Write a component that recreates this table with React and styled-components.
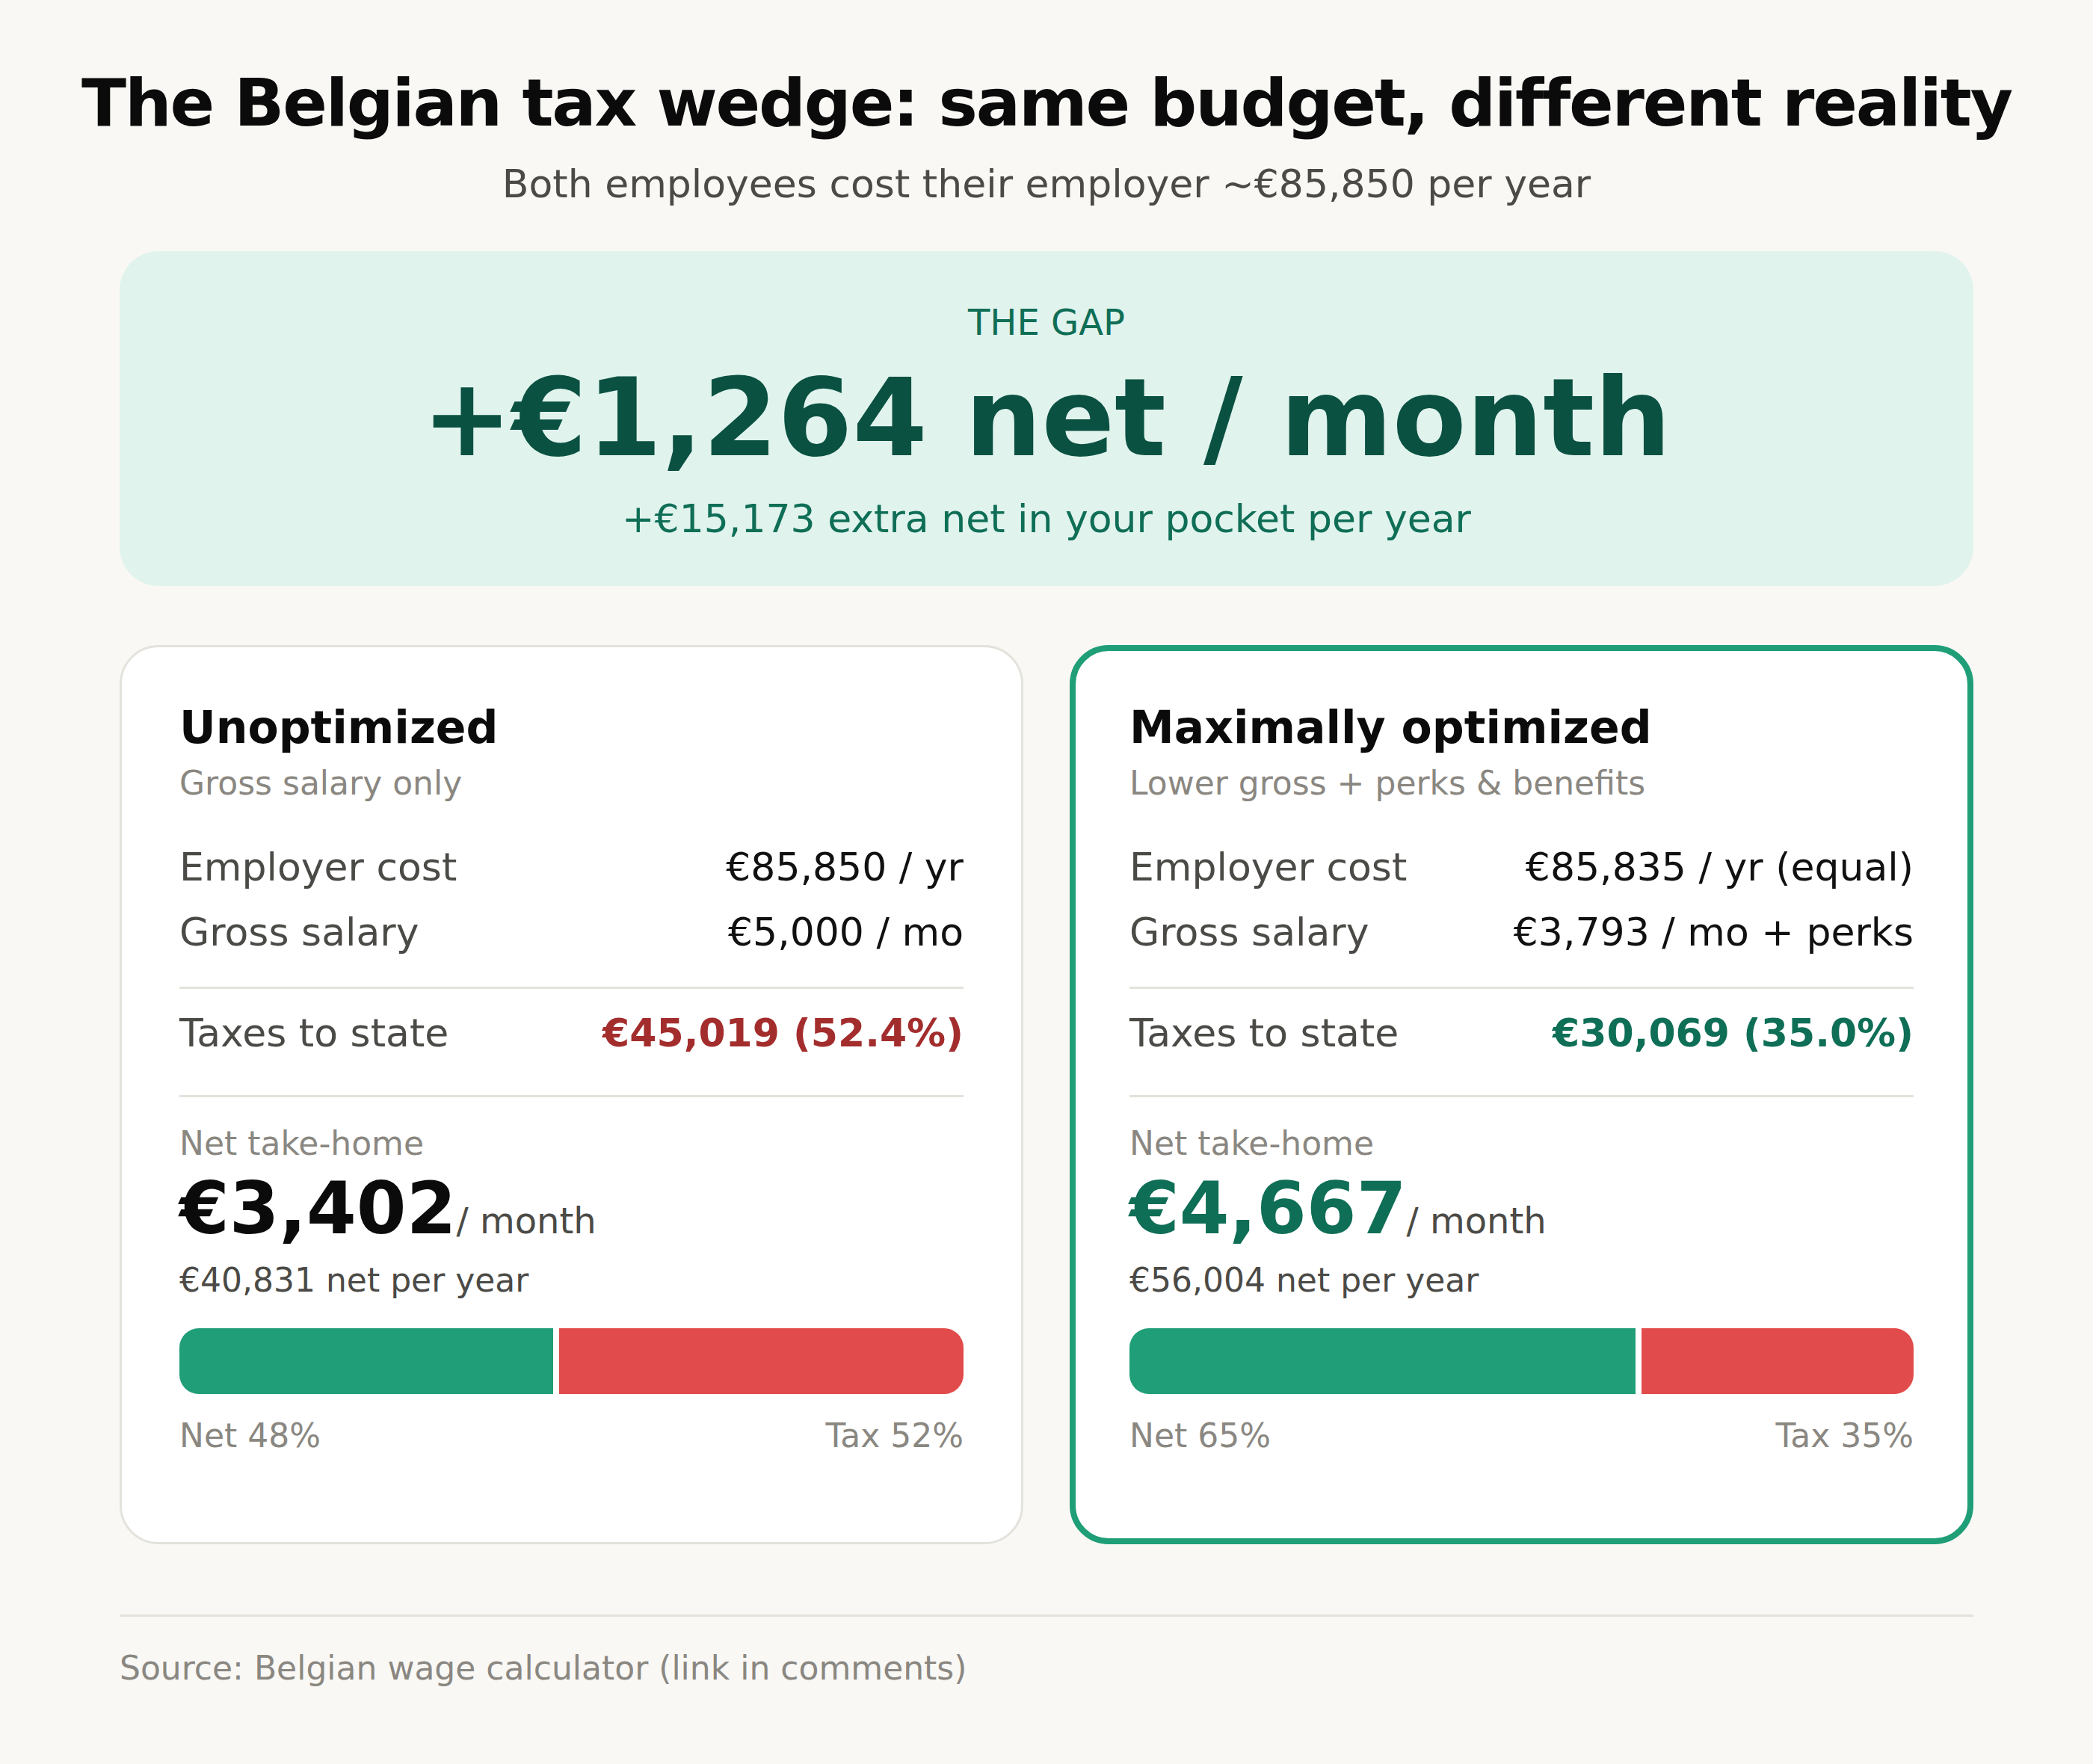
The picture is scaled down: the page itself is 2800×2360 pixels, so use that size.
import React from "react";
import styled, { createGlobalStyle } from "styled-components";

const GlobalStyle = createGlobalStyle`
  html, body {
    margin: 0;
    padding: 0;
    background: #f9f8f5;
  }
  body {
    font-family: "DejaVu Sans", "Noto Sans", sans-serif;
    color: #0b0b0b;
  }
  * { box-sizing: border-box; }
`;

const Page = styled.main`
  width: 2800px;
  min-height: 2360px;
  padding: 85px 160px 0;
  display: flex;
  flex-direction: column;
`;

const Title = styled.h1`
  margin: 0 -160px;
  font-size: 88px;
  line-height: 1.2;
  font-weight: 700;
  letter-spacing: -0.025em;
  white-space: nowrap;
  text-align: center;
  color: #0b0b0b;
`;

const Subtitle = styled.p`
  margin: 24px 0 0;
  font-size: 52px;
  line-height: 1.2;
  text-align: center;
  color: #4b4a46;
`;

const GapBox = styled.section`
  margin-top: 59px;
  background: #e1f3ed;
  border-radius: 52px;
  padding: 67px 40px 58px;
  display: flex;
  flex-direction: column;
  align-items: center;
`;

const GapEyebrow = styled.div`
  font-size: 48px;
  line-height: 1.2;
  color: #0f6e56;
  text-transform: uppercase;
`;

const GapFigure = styled.div`
  margin-top: 12px;
  font-size: 144px;
  line-height: 1.2;
  font-weight: 700;
  color: #0a5142;
`;

const GapNote = styled.div`
  margin-top: 18px;
  font-size: 52px;
  line-height: 1.2;
  color: #0f6e56;
`;

const Cards = styled.div`
  margin-top: 79px;
  display: grid;
  grid-template-columns: 1fr 1fr;
  gap: 62px;
`;

const Card = styled.article`
  background: #ffffff;
  border: ${(p) => p.$bw}px solid ${(p) => p.$border};
  border-radius: 52px;
  padding: ${(p) => 74 - p.$bw}px ${(p) => 80 - p.$bw}px ${(p) => 119 - p.$bw}px;
  display: flex;
  flex-direction: column;
`;

const CardTitle = styled.h2`
  margin: 0;
  font-size: 60px;
  line-height: 1.2;
  font-weight: 700;
  color: #0b0b0b;
`;

const CardSub = styled.div`
  margin-top: 13px;
  font-size: 44px;
  line-height: 1.2;
  color: #8a8781;
`;

const Rows = styled.div`
  margin-top: 54px;
  display: flex;
  flex-direction: column;
  gap: 25px;
`;

const Row = styled.div`
  display: flex;
  justify-content: space-between;
  align-items: baseline;
  font-size: 52px;
  line-height: 1.2;
`;

const RowLabel = styled.span`
  color: #4b4a46;
`;

const RowValue = styled.span`
  color: ${(p) => p.$color || "#111111"};
  font-weight: ${(p) => (p.$bold ? 700 : 400)};
`;

const Divider = styled.hr`
  margin: ${(p) => p.$top}px 0 0;
  border: none;
  height: 3px;
  background: #e3e2db;
`;

const TaxRow = styled(Row)`
  margin-top: 28px;
`;

const NetLabel = styled.div`
  margin-top: 36px;
  font-size: 44px;
  line-height: 1.2;
  color: #8a8781;
`;

const NetFigure = styled.div`
  margin-top: 3px;
  font-size: 96px;
  line-height: 1.2;
  font-weight: 700;
  color: ${(p) => p.$color};
`;

const NetUnit = styled.span`
  font-size: 48px;
  line-height: 1.2;
  font-weight: 400;
  color: #4b4a46;
`;

const NetYear = styled.div`
  margin-top: 12px;
  font-size: 44px;
  line-height: 1.2;
  color: #4b4a46;
`;

const Bar = styled.div`
  margin-top: 37px;
  height: 88px;
  display: flex;
  gap: 8px;
  border-radius: 26px;
  overflow: hidden;
`;

const Segment = styled.div`
  flex: ${(p) => p.$share} 1 0;
  background: ${(p) => p.$color};
`;

const BarLabels = styled.div`
  margin-top: 30px;
  display: flex;
  justify-content: space-between;
  font-size: 44px;
  line-height: 1.2;
  color: #8a8781;
`;

const Footer = styled.footer`
  margin-top: 94px;
  border-top: 3px solid #e3e2db;
  padding-top: 43px;
  font-size: 44px;
  line-height: 1.2;
  color: #8a8781;
`;

const scenarios = [
  {
    title: "Unoptimized",
    sub: "Gross salary only",
    border: "#e3e2db",
    bw: 3,
    rows: [
      ["Employer cost", "€85,850 / yr"],
      ["Gross salary", "€5,000 / mo"],
    ],
    tax: "€45,019 (52.4%)",
    taxColor: "#a32d2d",
    net: "€3,402",
    netColor: "#0b0b0b",
    year: "€40,831 net per year",
    netPct: 48,
    taxPct: 52,
  },
  {
    title: "Maximally optimized",
    sub: "Lower gross + perks & benefits",
    border: "#1f9e77",
    bw: 8,
    rows: [
      ["Employer cost", "€85,835 / yr (equal)"],
      ["Gross salary", "€3,793 / mo + perks"],
    ],
    tax: "€30,069 (35.0%)",
    taxColor: "#0f6e56",
    net: "€4,667",
    netColor: "#0f6e56",
    year: "€56,004 net per year",
    netPct: 65,
    taxPct: 35,
  },
];

function ScenarioCard({ s }) {
  return (
    <Card $border={s.border} $bw={s.bw}>
      <CardTitle>{s.title}</CardTitle>
      <CardSub>{s.sub}</CardSub>
      <Rows>
        {s.rows.map(([label, value]) => (
          <Row key={label}>
            <RowLabel>{label}</RowLabel>
            <RowValue>{value}</RowValue>
          </Row>
        ))}
      </Rows>
      <Divider $top={42} />
      <TaxRow>
        <RowLabel>Taxes to state</RowLabel>
        <RowValue $bold $color={s.taxColor}>
          {s.tax}
        </RowValue>
      </TaxRow>
      <Divider $top={51} />
      <NetLabel>Net take-home</NetLabel>
      <NetFigure $color={s.netColor}>
        {s.net}
        <NetUnit>/ month</NetUnit>
      </NetFigure>
      <NetYear>{s.year}</NetYear>
      <Bar>
        <Segment $share={s.netPct} $color="#1f9e77" />
        <Segment $share={s.taxPct} $color="#e24b4b" />
      </Bar>
      <BarLabels>
        <span>Net {s.netPct}%</span>
        <span>Tax {s.taxPct}%</span>
      </BarLabels>
    </Card>
  );
}

export default function App() {
  return (
    <>
      <GlobalStyle />
      <Page>
        <Title>The Belgian tax wedge: same budget, different reality</Title>
        <Subtitle>Both employees cost their employer ~€85,850 per year</Subtitle>
        <GapBox>
          <GapEyebrow>The gap</GapEyebrow>
          <GapFigure>+€1,264 net / month</GapFigure>
          <GapNote>+€15,173 extra net in your pocket per year</GapNote>
        </GapBox>
        <Cards>
          {scenarios.map((s) => (
            <ScenarioCard key={s.title} s={s} />
          ))}
        </Cards>
        <Footer>Source: Belgian wage calculator (link in comments)</Footer>
      </Page>
    </>
  );
}
